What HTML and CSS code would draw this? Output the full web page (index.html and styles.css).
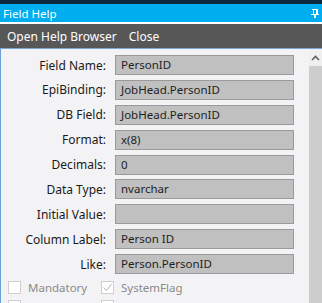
FILE: index.html
```html
<!DOCTYPE html>
<html lang="en">
<head>
    <meta charset="UTF-8">
    <title>Field Help</title>
    <link rel="stylesheet" href="styles.css">
</head>
<body>
    <div class="top-strip"></div>
    <div class="title-bar">
        <span class="title-text">Field Help</span>
        <svg class="pin" width="8" height="9" viewBox="0 0 8 9">
            <rect x="1" y="0" width="6" height="1" fill="#ffffff"/>
            <rect x="2" y="0" width="1" height="5" fill="#ffffff"/>
            <rect x="5" y="0" width="2" height="5" fill="#ffffff"/>
            <rect x="0" y="5" width="8" height="1" fill="#ffffff"/>
            <rect x="3" y="6" width="2" height="3" fill="#ffffff"/>
        </svg>
    </div>
    <div class="menu-bar">
        <span class="menu-item">Open Help Browser</span>
        <span class="menu-item">Close</span>
    </div>
    <div class="content">
        <div class="panel">
            <div class="field-row">
                <span class="label">Field Name:</span>
                <div class="value">PersonID</div>
            </div>
            <div class="field-row">
                <span class="label">EpiBinding:</span>
                <div class="value">JobHead.PersonID</div>
            </div>
            <div class="field-row">
                <span class="label">DB Field:</span>
                <div class="value">JobHead.PersonID</div>
            </div>
            <div class="field-row">
                <span class="label">Format:</span>
                <div class="value">x(8)</div>
            </div>
            <div class="field-row">
                <span class="label">Decimals:</span>
                <div class="value">0</div>
            </div>
            <div class="field-row">
                <span class="label">Data Type:</span>
                <div class="value">nvarchar</div>
            </div>
            <div class="field-row">
                <span class="label">Initial Value:</span>
                <div class="value"></div>
            </div>
            <div class="field-row">
                <span class="label">Column Label:</span>
                <div class="value">Person ID</div>
            </div>
            <div class="field-row">
                <span class="label">Like:</span>
                <div class="value">Person.PersonID</div>
            </div>
            <div class="check-grid">
                <div class="check"><span class="box"></span>Mandatory</div>
                <div class="check">
                    <span class="box">
                        <svg width="11" height="11" viewBox="0 0 11 11">
                            <polyline points="1.5,5.5 4.5,8.5 9.5,2" fill="none" stroke="#b4b4b4" stroke-width="1"/>
                        </svg>
                    </span>SystemFlag
                </div>
                <div class="check"><span class="box"></span>ReadOnly</div>
                <div class="check"><span class="box"></span>IsDescriptionField</div>
            </div>
        </div>
        <div class="scrollbar">
            <div class="scroll-up">
                <svg width="9" height="6" viewBox="0 0 9 6">
                    <polyline points="1,5 4.5,1.5 8,5" fill="none" stroke="#606060" stroke-width="1.6"/>
                </svg>
            </div>
            <div class="scroll-thumb"></div>
        </div>
    </div>
</body>
</html>
```

FILE: styles.css
```css
html, body {
    margin: 0;
    padding: 0;
    width: 322px;
    height: 303px;
    overflow: hidden;
}
body {
    font-family: "Noto Sans", "Open Sans", sans-serif;
    font-size: 12px;
    background-color: #f3f3f5;
}
.top-strip {
    height: 4px;
    background-color: #0c2a3e;
}
.title-bar {
    height: 18px;
    background-color: #00adef;
    color: #ffffff;
    display: flex;
    align-items: center;
    justify-content: space-between;
    padding: 0 3px 0 3px;
    border-bottom: 2px solid #ffffff;
}
.title-text {
    font-size: 11.5px;
}
.pin {
    margin-top: 1px;
}
.menu-bar {
    height: 24px;
    background-color: #575757;
    color: #ffffff;
    display: flex;
    align-items: center;
    gap: 12px;
    padding-left: 7px;
    font-size: 12px;
    border-bottom: 1px solid #7aa7d6;
}
.content {
    display: flex;
    height: 254px;
}
.panel {
    flex: 1;
    border-left: 1px solid #6a9fd8;
    padding-top: 6px;
}
.field-row {
    display: flex;
    align-items: center;
    height: 20px;
    margin-bottom: 4.9px;
}
.label {
    width: 105px;
    text-align: right;
    color: #1a1a1a;
    padding-right: 9px;
}
.value {
    box-sizing: border-box;
    width: 179px;
    height: 20px;
    background-color: #c0c0c0;
    border: 1px solid #9a9a9a;
    padding-left: 5px;
    line-height: 18px;
    font-size: 11.5px;
    color: #1e1e1e;
}
.check-grid {
    display: grid;
    grid-template-columns: 93px auto;
    row-gap: 5px;
    padding-left: 7px;
    margin-top: 6px;
}
.check {
    display: flex;
    align-items: center;
    gap: 7px;
    color: #8a8a8a;
    height: 14px;
    font-size: 11.5px;
}
.box {
    box-sizing: border-box;
    width: 13px;
    height: 13px;
    border: 1px solid #cfcfcf;
    background-color: #ffffff;
    display: flex;
    align-items: center;
    justify-content: center;
}
.scrollbar {
    width: 13px;
    display: flex;
    flex-direction: column;
    background-color: #f0f0f0;
}
.scroll-up {
    height: 17px;
    display: flex;
    align-items: center;
    justify-content: center;
}
.scroll-thumb {
    flex: 1;
    background-color: #cdcdcd;
}
```
